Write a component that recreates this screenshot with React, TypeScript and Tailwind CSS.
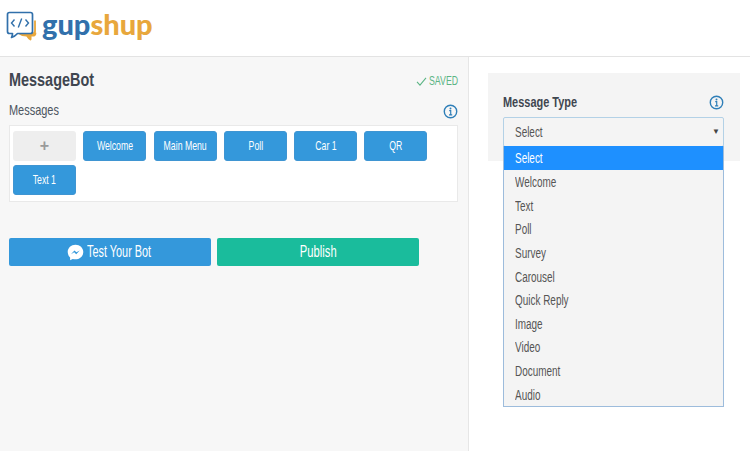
import React from "react";

const sans = "font-['Liberation_Sans',sans-serif]";

function Info({ className }: { className?: string }) {
  return (
    <svg viewBox="0 0 14 14" className={className} fill="none" stroke="#2f7fb8" strokeWidth="1.3">
      <circle cx="7" cy="7" r="5.8" />
      <circle cx="7" cy="4.200" r="0.9" fill="#2f7fb8" stroke="none" />
      <path d="M5.800 6.200H7.200V10M5.600 10.200H8.600" strokeWidth="1.100" />
    </svg>
  );
}

function Logo() {
  return (
    <div className="flex items-start">
      <svg viewBox="0 0 32 32" className="w-[32px] h-[32px]" fill="none">
        <path
          d="M30 10.500V21c0 1.600-.9 2.500-2.500 2.500H14.500c1.500 1.400 4 2.300 7.500 2.200 1 1.600 2 2.800 3.500 3.800.2-1.200.2-2.300 0-3.800h2c2 0 3-1 3-3"
          fill="#e8a73c"
          stroke="#e8a73c"
          strokeWidth="1.800"
          strokeLinejoin="round"
        />
        <path
          d="M4.500 2.500h21c1.200 0 2 .8 2 2v17c0 1.200-.8 2-2 2H12.500c-1.500 1.700-3.600 3.300-6 4 .6-1.300 1-2.600 1-4h-3c-1.200 0-2-.8-2-2v-17c0-1.200.8-2 2-2z"
          fill="#fff"
          stroke="#3170ab"
          strokeWidth="1.700"
          strokeLinejoin="round"
        />
        <path d="M9.500 9.500 6.500 13l3 3.500M20.500 9.500l3 3.500-3 3.500M16.700 8.500l-3.400 9" stroke="#3170ab" strokeWidth="1.400" />
      </svg>
      <div className="ml-[5px] font-['Lato',sans-serif] font-black text-[29px] leading-none mt-[-1px]">
        <span className="text-[#3170ab]">gup</span>
        <span className="text-[#e8a73c]">shup</span>
      </div>
    </div>
  );
}

function Messenger() {
  return (
    <svg viewBox="0 0 24 24" className="w-[17px] h-[17px] shrink-0">
      <path
        fill="#fff"
        d="M12 1C5.800 1 1 5.500 1 11.400c0 3.100 1.300 5.800 3.400 7.600v4l3.700-2c1.200.4 2.500.6 3.900.6 6.200 0 11-4.500 11-10.300S18.200 1 12 1z"
      />
      <path fill="#3498db" d="m5.500 14.500 5-5.400 2.800 2.700 4.700-2.700-5 5.400-2.800-2.800z" />
    </svg>
  );
}

const msgs = ["Welcome", "Main Menu", "Poll", "Car 1", "QR", "Text 1"];
const options = ["Welcome", "Text", "Poll", "Survey", "Carousel", "Quick Reply", "Image", "Video", "Document", "Audio"];

export default function App() {
  return (
    <div className={`w-[750px] h-[451px] overflow-hidden bg-white flex flex-col ${sans}`}>
      <header className="h-[57px] shrink-0 border-b border-[#e3e3e3] pl-[5px] pt-[10px]">
        <Logo />
      </header>
      <div className="flex flex-1 min-h-0">
        <section className="w-[469px] shrink-0 bg-[#f7f7f7] border-r border-[#e6e6e6] pl-[9px] pr-[10px] pt-[12px]">
          <div className="flex items-center justify-between h-[20px]">
            <h1 className="text-[19px] font-bold leading-none text-[#3f4650] inline-block origin-left scale-x-[0.76] whitespace-nowrap">
              MessageBot
            </h1>
            <div className="flex items-center justify-end gap-[2px] mt-[4px] text-[#5cb585]">
              <svg viewBox="0 0 12 10" className="w-[11px] h-[9px]" fill="none" stroke="#5cb585" strokeWidth="1.200">
                <path d="M1 5.500 4.300 9 11 1" />
              </svg>
              <span className="inline-block w-[29px] whitespace-nowrap text-[12px] origin-left scale-x-[0.73]">SAVED</span>
            </div>
          </div>
          <div className="flex items-center justify-between mt-[11px] h-[20px]">
            <span className="text-[15px] text-[#4c5560] inline-block origin-left scale-x-[0.73]">Messages</span>
            <Info className="w-[15px] h-[15px] mt-[3px]" />
          </div>
          <div className="mt-[5px] w-[449px] h-[77px] bg-white border border-[#e9e9e9] pl-[3px] pt-[5px]">
            <div className="flex flex-wrap gap-x-[7.300px] gap-y-[4px]">
              <div className="w-[63px] h-[30px] rounded-[3px] bg-[#eeeeee] flex items-center justify-center text-[#9a9a9a] font-bold text-[16px]">
                +
              </div>
              {msgs.map((m) => (
                <div
                  key={m}
                  className="w-[63px] h-[30px] rounded-[3px] bg-[#3498db] border border-[#3f95d2] flex items-center justify-center text-white"
                >
                  <span className="inline-block whitespace-nowrap text-[13px] scale-x-[0.67]">{m}</span>
                </div>
              ))}
            </div>
          </div>
          <div className="flex gap-[6px] mt-[36px]">
            <button className="w-[202px] h-[28px] rounded-[2px] bg-[#3498db] text-white flex items-center justify-center">
              <Messenger />
              <span className="inline-block w-[66px] ml-[3px] whitespace-nowrap text-[16px] origin-left scale-x-[0.68] text-left">Test Your Bot</span>
            </button>
            <button className="w-[202px] h-[28px] rounded-[2px] bg-[#1abc9c] text-white flex items-center justify-center">
              <span className="inline-block whitespace-nowrap text-[16px] scale-x-[0.7]">Publish</span>
            </button>
          </div>
        </section>
        <section className="flex-1 pl-[19px] pt-[16px] pr-[10px]">
          <div className="relative h-[88px] bg-[#f4f4f4] pl-[15px] pr-[16px] pt-[20px]">
            <div className="flex items-center justify-between h-[18px]">
              <span className="text-[15px] font-bold text-[#3f4650] inline-block origin-left scale-x-[0.73] whitespace-nowrap">Message Type</span>
              <Info className="w-[15px] h-[15px]" />
            </div>
            <div className="mt-[6px] h-[30px] border border-[#b3d1e6] rounded-[2px] flex items-center justify-between pl-[11px] pr-[3px] text-[#555]">
              <span className="inline-block text-[14px] origin-left scale-x-[0.71]">Select</span>
              <span className="text-[8px] text-[#444]">▼</span>
            </div>
            <div className="absolute left-[15px] top-[73px] w-[221px] z-10 bg-[#f4f4f4] border border-[#9dbcdc] text-[#555]">
              <div className="h-[24px] -mt-[1px] bg-[#1e90ff] text-white flex items-center pl-[11px]">
                <span className="inline-block text-[14px] font-medium origin-left scale-x-[0.71]">Select</span>
              </div>
              {options.map((o) => (
                <div key={o} className="h-[23.600px] translate-y-[0.500px] flex items-center pl-[11px]">
                  <span className="inline-block whitespace-nowrap text-[14px] origin-left scale-x-[0.71]">{o}</span>
                </div>
              ))}
            </div>
          </div>
        </section>
      </div>
    </div>
  );
}
